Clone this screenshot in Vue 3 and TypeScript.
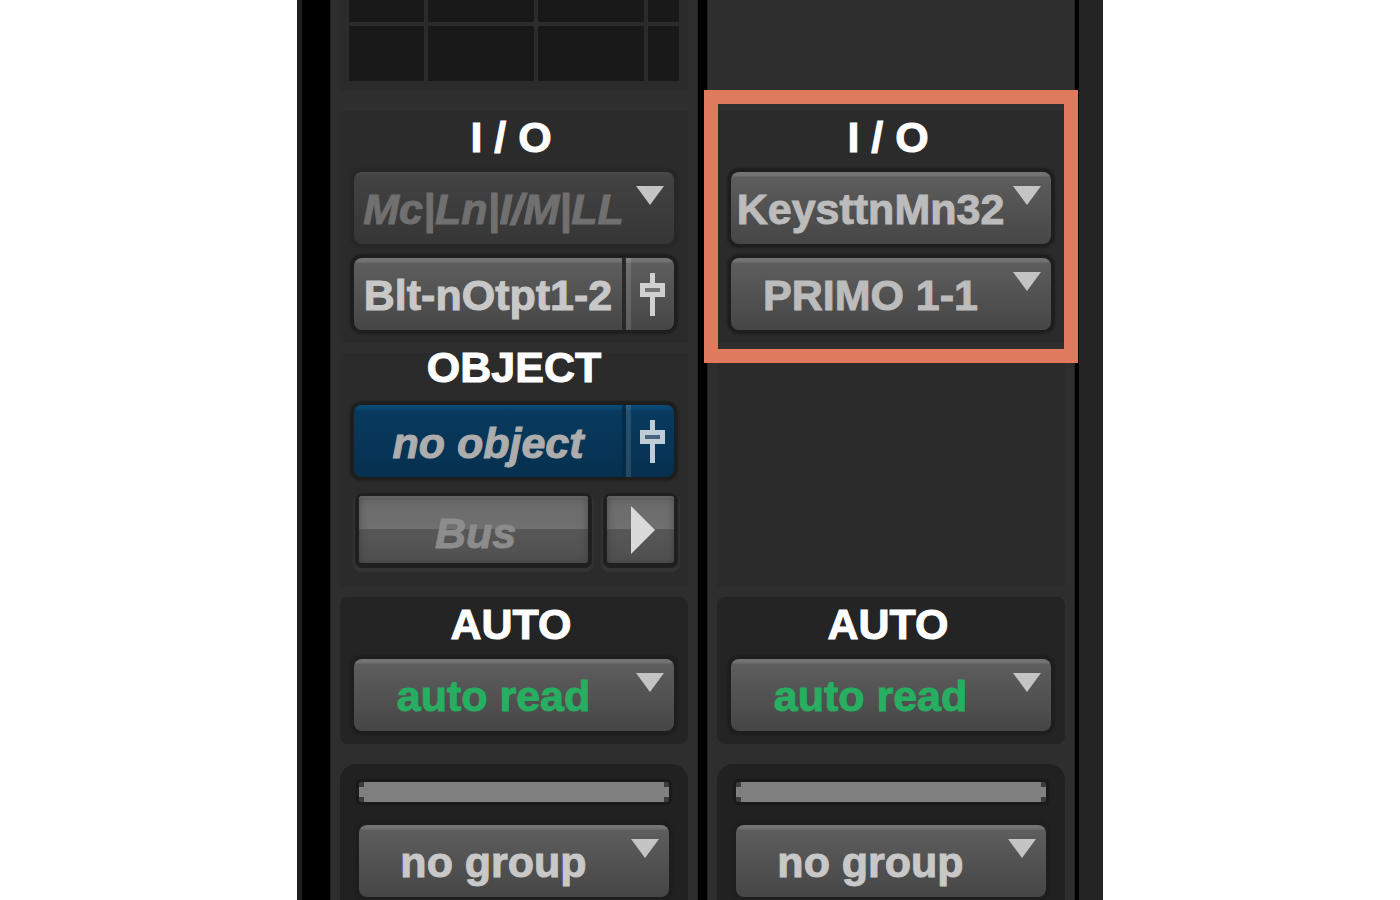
<script setup lang="ts">
import { ref } from 'vue'

interface Selector {
  label: string
  value: string
  inactive?: boolean
}

interface Strip {
  id: string
  input: Selector
  output: Selector
  hasObject: boolean
  highlighted: boolean
  automation: string
  group: string
}

const strips = ref<Strip[]>([
  {
    id: 'audio',
    input: { label: 'Input', value: 'Mc|Ln|I/M|LL', inactive: true },
    output: { label: 'Output', value: 'Blt-nOtpt1-2' },
    hasObject: true,
    highlighted: false,
    automation: 'auto read',
    group: 'no group',
  },
  {
    id: 'midi',
    input: { label: 'MIDI input', value: 'KeysttnMn32' },
    output: { label: 'MIDI output', value: 'PRIMO 1-1' },
    hasObject: false,
    highlighted: true,
    automation: 'auto read',
    group: 'no group',
  },
])
</script>

<template>
  <main class="page">
    <div class="mixer">
      <div class="edge"></div>
      <template v-for="strip in strips" :key="strip.id">
        <div class="divider"></div>
        <section class="strip">
          <div class="eq" :class="{ blank: !strip.hasObject }">
            <template v-if="strip.hasObject">
              <span v-for="n in 8" :key="n" class="cell"></span>
            </template>
          </div>

          <div class="panel io" :class="{ midi: strip.highlighted }">
            <h2 class="title">I / O</h2>
            <div class="control drop" :class="{ inactive: strip.input.inactive }">
              <select :aria-label="strip.input.label">
                <option>{{ strip.input.value }}</option>
              </select>
              <svg class="caret" viewBox="0 0 28 19"><path d="M0 0H28L14 19Z" /></svg>
            </div>
            <div v-if="strip.hasObject" class="control split">
              <button type="button" class="main">{{ strip.output.value }}</button>
              <button type="button" class="fader" aria-label="Output window">
                <svg viewBox="0 0 25 43">
                  <path class="hole" d="M4 14H21V20H4Z" />
                  <path d="M10 0H15V10H25V24H15V43H10V24H0V10H10ZM5 15V19H20V15Z" fill-rule="evenodd" />
                </svg>
              </button>
            </div>
            <div v-else class="control drop">
              <select :aria-label="strip.output.label">
                <option>{{ strip.output.value }}</option>
              </select>
              <svg class="caret" viewBox="0 0 28 19"><path d="M0 0H28L14 19Z" /></svg>
            </div>
            <div v-if="strip.highlighted" class="highlight"></div>
          </div>

          <div class="panel object">
            <template v-if="strip.hasObject">
              <h2 class="title centred">OBJECT</h2>
              <div class="control split blue">
                <button type="button" class="main">no object</button>
                <button type="button" class="fader" aria-label="Object window">
                  <svg viewBox="0 0 25 43">
                    <path class="hole" d="M4 14H21V20H4Z" />
                    <path d="M10 0H15V10H25V24H15V43H10V24H0V10H10ZM5 15V19H20V15Z" fill-rule="evenodd" />
                  </svg>
                </button>
              </div>
              <div class="bus-row">
                <button type="button" class="glossy bus">Bus</button>
                <button type="button" class="glossy play" aria-label="Toggle bus or object">
                  <svg viewBox="0 0 24 48"><path d="M0 0L24 24L0 48Z" /></svg>
                </button>
              </div>
            </template>
          </div>

          <div class="panel auto">
            <h2 class="title">AUTO</h2>
            <div class="control drop green">
              <select aria-label="Automation mode">
                <option>{{ strip.automation }}</option>
              </select>
              <svg class="caret" viewBox="0 0 28 19"><path d="M0 0H28L14 19Z" /></svg>
            </div>
          </div>

          <div class="panel group">
            <div class="colour-bar"><i></i></div>
            <div class="control drop">
              <select aria-label="Group">
                <option>{{ strip.group }}</option>
              </select>
              <svg class="caret" viewBox="0 0 28 19"><path d="M0 0H28L14 19Z" /></svg>
            </div>
          </div>
        </section>
      </template>
      <div class="divider"></div>
      <div class="edge right"></div>
    </div>
  </main>
</template>

<style>
body {
  margin: 0;
  background: #fff;
}
</style>

<style scoped>
.page {
  display: flex;
  justify-content: center;
  height: 100vh;
  overflow: hidden;
  font-family: 'Liberation Sans', Arial, sans-serif;
  font-size: 43px;
  font-weight: 700;
  -webkit-text-stroke: 1px;
}

.page *,
.page {
  box-sizing: border-box;
}

.mixer {
  display: grid;
  grid-template-columns: 5px 28px minmax(0, 1fr) 9px minmax(0, 1fr) 4px 24px;
  width: 100%;
  max-width: 806px;
  background: #000;
}

.edge {
  background: #1e1e1e;
}

.edge.right {
  background: #242424;
}

.strip {
  padding: 0 10px;
  background: #2e2e2e;
  box-shadow: inset 1px 0 #222, inset -1px 0 #222;
}

.eq {
  display: grid;
  grid-template-columns: 75fr 106fr 106fr 31fr;
  grid-template-rows: 22px 55px;
  gap: 4px;
  padding: 0 9px 10px;
  background: #2b2b2b;
}

.eq.blank {
  background: none;
}

.cell {
  background: #191919;
}

.panel {
  position: relative;
  padding: 0 14px;
  background: #2b2b2b;
}

.io {
  z-index: 1;
  margin-top: 20px;
  padding-top: 12px;
  padding-bottom: 13px;
}

.object {
  min-height: 234px;
  margin-top: 10px;
}

.auto {
  margin-top: 10px;
  padding-top: 13px;
  padding-bottom: 13px;
  border-radius: 8px;
  background: #242424;
}

.group {
  margin-top: 20px;
  padding: 18px 19px 20px;
  border-radius: 16px 16px 0 0;
  background: #212121;
}

.title {
  margin: 0 0 21px;
  padding-right: 6px;
  color: #fff;
  font-size: 43px;
  line-height: 28px;
  text-align: center;
}

.title.centred {
  margin-bottom: 24px;
  padding-right: 0;
}

.control {
  position: relative;
  height: 72px;
  border-radius: 8px;
  background: linear-gradient(#757575 0, #707070 4px, #5d5d5d 5px, #464646 100%);
  box-shadow: 0 0 0 3px #1e1e1e, 0 0 2px 4px #1f1f1f;
  color: #c8c8c8;
}

.io .control + .control {
  margin-top: 14px;
}

.midi .control {
  color: #bcbcbc;
}

.control.inactive {
  background: linear-gradient(#4b4b4b 0, #424242 5px, #363636 100%);
  box-shadow: 0 0 0 3px #272727, 0 0 2px 4px #282828;
}

select,
button {
  margin: 0;
  border: 0;
  background: none;
  color: inherit;
  font: inherit;
  cursor: pointer;
  -webkit-text-stroke: inherit;
}

select {
  appearance: none;
  width: 100%;
  height: 100%;
  padding: 2px 41px 0 0;
  line-height: 60px;
  text-align: center;
  text-align-last: center;
}

.inactive select {
  color: #707070;
  font-style: italic;
}

.green select {
  color: #27ae60;
}

.caret {
  position: absolute;
  top: 14px;
  right: 10px;
  width: 28px;
  height: 19px;
  fill: #c4c4c4;
  pointer-events: none;
}

.split {
  display: flex;
}

.main {
  flex: 1;
  min-width: 0;
  padding: 2px 0 0;
  white-space: nowrap;
}

.fader {
  display: flex;
  align-items: center;
  justify-content: center;
  width: 52px;
  padding: 0 0 0 4px;
  border-left: 4px solid #292929;
  box-shadow: inset 5px 0 rgba(255, 255, 255, 0.12);
}

.fader svg {
  width: 25px;
  height: 43px;
  fill: #d0d0d0;
}

.fader .hole {
  fill: #757575;
}

.blue {
  background: linear-gradient(#084a75 0, #08456e 4px, #083a5f 6px, #06304f 100%);
  color: #adadad;
}

.blue .main {
  padding-top: 4px;
  font-style: italic;
}

.blue .fader {
  border-left-color: #062b47;
}

.blue .fader svg {
  fill: #c0ccd6;
}

.blue .fader .hole {
  fill: #44647f;
}

.bus-row {
  display: flex;
  gap: 19px;
  margin-top: 19px;
  padding-left: 5px;
}

.glossy {
  height: 67px;
  border-radius: 3px;
  background: linear-gradient(#6b6b6b 0, #707070 50%, #575757 50%, #505050 100%);
  box-shadow: inset 0 1px 8px rgba(50, 50, 50, 0.55), inset 0 2px #777, 0 1px 1px 4px #1f1f1f, 0 3px 2px 6px #353535;
}

.bus {
  flex: 1;
  padding: 8px 0 0 4px;
  color: #8c8c8c;
  font-style: italic;
}

.play {
  display: flex;
  align-items: center;
  justify-content: center;
  width: 67px;
  padding: 0 0 0 4px;
}

.play svg {
  width: 24px;
  height: 48px;
  fill: #dadada;
}

.colour-bar {
  height: 20px;
  margin-bottom: 23px;
  border-radius: 2px;
  background: #3c3c3c;
  box-shadow: 0 0 1px 3px #1a1a1a;
}

.colour-bar i {
  display: block;
  height: 100%;
  background: #808080;
  clip-path: polygon(5px 0, calc(100% - 5px) 0, calc(100% - 5px) 5px, 100% 5px, 100% 15px, calc(100% - 5px) 15px, calc(100% - 5px) 100%, 5px 100%, 5px 15px, 0 15px, 0 5px, 5px 5px);
}

.highlight {
  position: absolute;
  inset: -21px -13px -20px;
  border: 14px solid #df7a5d;
  pointer-events: none;
}
</style>
